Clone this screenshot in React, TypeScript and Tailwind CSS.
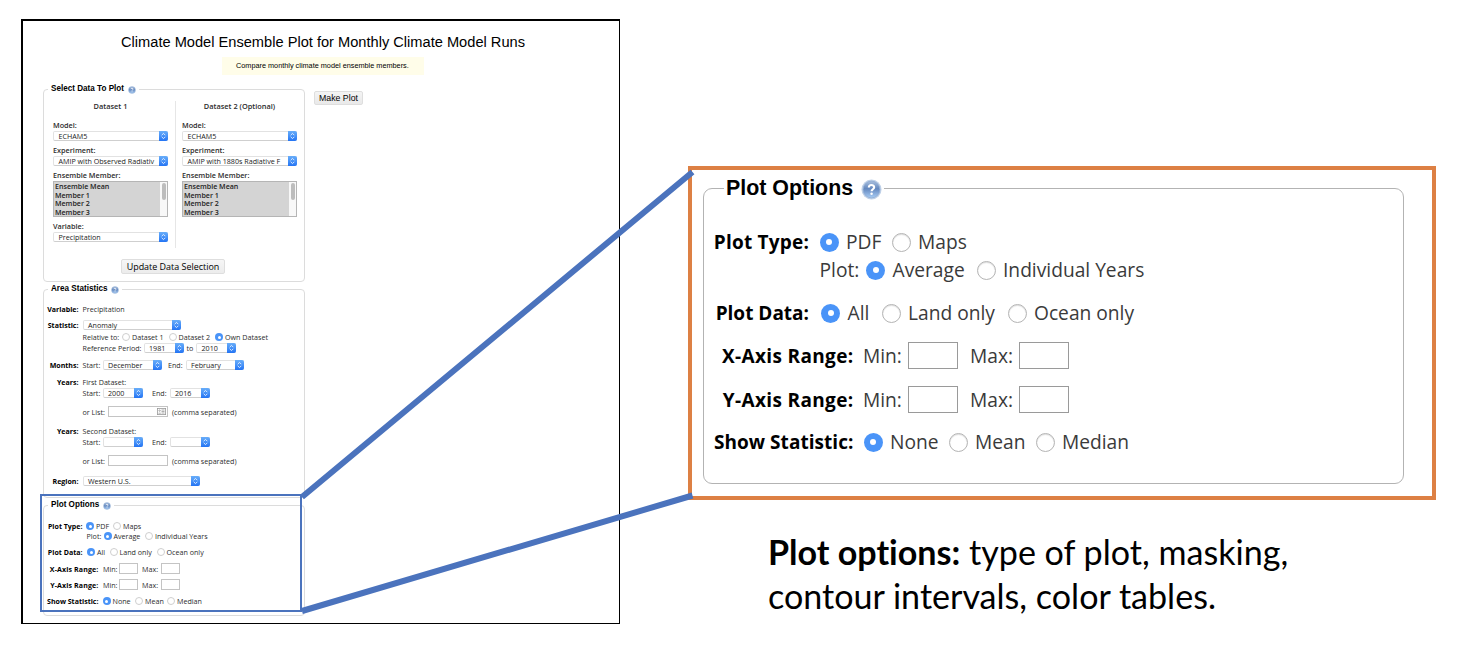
import React from "react";

type Kids = { className?: string; children?: React.ReactNode };

const Row = ({ className = "", children }: Kids) => (
  <div className={`flex items-center ${className}`}>{children}</div>
);

const T = ({ className = "", children }: Kids) => (
  <span className={`block shrink-0 whitespace-nowrap ${className}`}>{children}</span>
);

const Help = ({ className = "" }: { className?: string }) => (
  <svg viewBox="0 0 22 22" className={`shrink-0 ${className}`}>
    <defs>
      <linearGradient id="helpFill" x1="0" y1="0" x2="0" y2="1">
        <stop offset="0" stopColor="#a9bfdd" />
        <stop offset="0.45" stopColor="#6488bf" />
        <stop offset="1" stopColor="#a8cdf5" />
      </linearGradient>
    </defs>
    <circle cx="11" cy="11" r="10.5" fill="#bfd1e8" />
    <circle cx="11" cy="11" r="8.8" fill="url(#helpFill)" stroke="#8fabd2" strokeWidth="0.8" />
    <path
      d="M8.2 8.8C8.2 5.4 13.8 5.5 13.8 8.6C13.8 10.7 11.1 10.7 11.1 12.8"
      fill="none"
      stroke="#fff"
      strokeWidth="2.2"
    />
    <circle cx="11.1" cy="15.5" r="1.3" fill="#fff" />
  </svg>
);

const Radio = ({ on, big }: { on?: boolean; big?: boolean }) => {
  const size = big ? "h-[19px] w-[19px]" : "h-[8px] w-[8px]";
  if (on) {
    return (
      <span className={`flex shrink-0 items-center justify-center rounded-full bg-[#4a94f8] ${size}`}>
        <span className={`rounded-full bg-white ${big ? "h-[6px] w-[6px]" : "h-[3px] w-[3px]"}`} />
      </span>
    );
  }
  return (
    <span
      className={`shrink-0 rounded-full border bg-white ${
        big ? "border-[#b4b4b4] shadow-[inset_0_1px_1px_#ddd]" : "border-[#cfcfcf]"
      } ${size}`}
    />
  );
};

const Option = ({ on, big, className = "", children }: Kids & { on?: boolean; big?: boolean }) => (
  <span className={`flex shrink-0 items-center whitespace-nowrap ${big ? "gap-[7.5px]" : "gap-[2px]"} ${className}`}>
    <Radio on={on} big={big} />
    <span>{children}</span>
  </span>
);

const Select = ({ className = "", children }: Kids) => (
  <span
    className={`flex h-[10px] shrink-0 items-stretch rounded-[2px] border border-[#e2e2e2] border-b-[#cfcfcf] bg-white text-[#222] ${className}`}
  >
    <span className="-my-px flex min-w-0 flex-1 items-center whitespace-nowrap pl-[4.5px] leading-[10px]">
      <span>{children}</span>
    </span>
    <span className="-my-px -mr-px flex w-[9px] shrink-0 items-center justify-center rounded-r-[2px] bg-linear-to-b from-[#68adf9] to-[#2374f4]">
      <svg viewBox="0 0 9 10" className="h-[10px] w-[9px]" fill="none" stroke="#fff" strokeWidth="0.8">
        <path d="M2.7 4.2L4.5 2.4L6.3 4.2M2.7 5.8L4.5 7.6L6.3 5.8" />
      </svg>
    </span>
  </span>
);

const Members = () => (
  <div className="flex h-[36px] w-[115px] border border-[#b5b5b5] bg-[#d4d4d4]">
    <div className="flex-1 pl-px text-[7.1px] font-semibold leading-[8.7px] text-[#222]">
      <div>Ensemble Mean</div>
      <div>Member 1</div>
      <div>Member 2</div>
      <div>Member 3</div>
    </div>
    <div className="flex w-[7px] justify-center bg-[#f8f8f8] pt-px">
      <div className="h-[17px] w-[4px] rounded-full bg-[#bdbdbd]" />
    </div>
  </div>
);

const Legend = ({ children }: Kids) => (
  <legend className="ml-[4px] flex h-[12px] items-center bg-white px-[3px] font-['Liberation_Sans',sans-serif] text-[8.15px] font-bold leading-[12px] text-black">
    <span>{children}</span>
    <Help className="ml-[4px] mt-px h-[8px] w-[8px]" />
  </legend>
);

const smallInput = "h-[11px] w-[19px] shrink-0 border border-[#c4c4c4] bg-white";
const bigInput = "h-[27px] w-[50px] shrink-0 border border-[#9a9a9a] bg-white";
const fieldLabel = "font-semibold text-[7.25px]";

const Dataset = ({ title, experiment, className = "", children }: Kids & { title: string; experiment: string }) => (
  <div className={`flex flex-col ${className}`}>
    <T className="h-[25px] w-[115px] text-center text-[7.4px] font-semibold leading-[22px]">{title}</T>
    <T className={`h-[11px] leading-[10px] ${fieldLabel}`}>Model:</T>
    <Select className="w-[115px]">ECHAM5</Select>
    <T className={`mt-[4px] h-[11px] leading-[10px] ${fieldLabel}`}>Experiment:</T>
    <Select className="w-[115px]">{experiment}</Select>
    <T className={`mt-[4px] h-[11px] leading-[10px] ${fieldLabel}`}>Ensemble Member:</T>
    <Members />
    {children}
  </div>
);

const SelectData = () => (
  <fieldset className="h-[199px] w-[262px] rounded-[4px] border border-[#dcdcdc]">
    <Legend>Select Data To Plot</Legend>
    <div className="flex">
      <div className="w-[131px] pl-[9px]">
        <Dataset title="Dataset 1" experiment="AMIP with Observed Radiativ">
          <T className={`mt-[4px] h-[11px] leading-[10px] ${fieldLabel}`}>Variable:</T>
          <Select className="w-[115px]">Precipitation</Select>
        </Dataset>
      </div>
      <div className="mt-[6px] h-[147px] w-px bg-[#e6e6e6]" />
      <div className="pl-[6px]">
        <Dataset title="Dataset 2 (Optional)" experiment="AMIP with 1880s Radiative F" />
      </div>
    </div>
    <div className="mt-[11px] flex pl-[77px]">
      <button className="h-[15px] w-[104px] whitespace-nowrap rounded-[2px] border border-[#dedede] bg-linear-to-b from-[#f6f6f6] to-[#ececec] text-[8.95px] font-medium leading-[13px] text-black">
        Update Data Selection
      </button>
    </div>
  </fieldset>
);

const label = "flex justify-end font-bold text-black text-[7.05px]";

const YearsBlock = ({ title, from, to, icon }: { title: string; from: string; to: string; icon?: boolean }) => (
  <>
    <Row className="h-[10px]">
      <T className={`w-[34.5px] ${label}`}>Years:</T>
      <T className="ml-[4px]">{title}</T>
    </Row>
    <Row className="h-[11px] pl-[38.5px]">
      <T className="w-[20px]">Start:</T>
      <Select className="w-[40.5px]">{from}</Select>
      <T className="ml-[9px] w-[17.5px]">End:</T>
      <Select className="w-[40px]">{to}</Select>
    </Row>
    <Row className="mt-[8px] h-[11px] pl-[38.5px]">
      <T className="w-[25.5px]">or List:</T>
      <span className="flex h-[11px] w-[60px] items-center justify-end border border-[#c4c4c4] bg-white pr-px">
        {icon && (
          <svg viewBox="0 0 9 7" className="h-[7px] w-[9px]" fill="none" stroke="#999" strokeWidth="0.8">
            <rect x="0.4" y="0.4" width="8.2" height="6.2" />
            <path d="M4.5 2H7.5M4.5 3.5H7.5M4.5 5H7.5" />
            <circle cx="2.6" cy="2.6" r="0.7" />
            <path d="M1.5 5.2H3.8" />
          </svg>
        )}
      </span>
      <T className="ml-[4px]">(comma separated)</T>
    </Row>
  </>
);

const AreaStatistics = () => (
  <fieldset className="mt-px h-[215px] w-[262px] rounded-[4px] border border-[#dcdcdc]">
    <Legend>Area Statistics</Legend>
    <Row className="mt-[9px] h-[10px]">
      <T className={`w-[34.5px] ${label}`}>Variable:</T>
      <T className="ml-[4px]">Precipitation</T>
    </Row>
    <Row className="mt-[6px] h-[10px]">
      <T className={`w-[34.5px] ${label}`}>Statistic:</T>
      <Select className="ml-[4px] w-[98px]">Anomaly</Select>
    </Row>
    <Row className="mt-[2px] h-[10px] pl-[38.5px]">
      <T className="w-[39.5px]">Relative to:</T>
      <Option className="w-[46.5px]">Dataset 1</Option>
      <Option className="w-[46.5px]">Dataset 2</Option>
      <Option on>Own Dataset</Option>
    </Row>
    <Row className="mt-px h-[10px] pl-[38.5px]">
      <T className="w-[61px]">Reference Period:</T>
      <Select className="w-[40.5px]">1981</Select>
      <T className="ml-[2.5px] w-[9.5px]">to</T>
      <Select className="w-[40px]">2010</Select>
    </Row>
    <Row className="mt-[7px] h-[10px]">
      <T className={`w-[34.5px] ${label}`}>Months:</T>
      <T className="ml-[4px] w-[20px]">Start:</T>
      <Select className="w-[59px]">December</Select>
      <T className="ml-[6.5px] w-[17.5px]">End:</T>
      <Select className="w-[58.5px]">February</Select>
    </Row>
    <div className="mt-[7px]">
      <YearsBlock title="First Dataset:" from="2000" to="2016" icon />
    </div>
    <div className="mt-[9px]">
      <YearsBlock title="Second Dataset:" from="" to="" />
    </div>
    <Row className="mt-[9px] h-[11px]">
      <T className={`w-[34.5px] ${label}`}>Region:</T>
      <Select className="ml-[4px] w-[117px]">Western U.S.</Select>
    </Row>
  </fieldset>
);

const PlotOptionsSmall = () => (
  <fieldset className="mt-px h-[117px] w-[262px] rounded-[4px] border border-[#dcdcdc]">
    <Legend>Plot Options</Legend>
    <Row className="mt-[10px] h-[10px]">
      <T className={`w-[38.5px] ${label}`}>Plot Type:</T>
      <Option on className="ml-[3.5px] w-[27px]">PDF</Option>
      <Option>Maps</Option>
    </Row>
    <Row className="h-[10px] pl-[42.5px]">
      <T className="w-[17px]">Plot:</T>
      <Option on className="w-[41.5px]">Average</Option>
      <Option>Individual Years</Option>
    </Row>
    <Row className="mt-[6px] h-[10px]">
      <T className={`w-[38.5px] ${label}`}>Plot Data:</T>
      <Option on className="ml-[4.5px] w-[22.5px]">All</Option>
      <Option className="w-[47px]">Land only</Option>
      <Option>Ocean only</Option>
    </Row>
    <Row className="mt-[6px] h-[11px]">
      <T className={`w-[54.5px] tracking-[0.12px] ${label}`}>X-Axis Range:</T>
      <T className="ml-[4.5px] w-[16px]">Min:</T>
      <span className={smallInput} />
      <T className="ml-[4px] w-[18.5px]">Max:</T>
      <span className={smallInput} />
    </Row>
    <Row className="mt-[5px] h-[11px]">
      <T className={`w-[54.5px] tracking-[0.12px] ${label}`}>Y-Axis Range:</T>
      <T className="ml-[4.5px] w-[16px]">Min:</T>
      <span className={smallInput} />
      <T className="ml-[4px] w-[18.5px]">Max:</T>
      <span className={smallInput} />
    </Row>
    <Row className="mt-[6px] h-[10px]">
      <T className={`w-[54.5px] ${label}`}>Show Statistic:</T>
      <Option on className="ml-[4px] w-[32.5px]">None</Option>
      <Option className="w-[32px]">Mean</Option>
      <Option>Median</Option>
    </Row>
  </fieldset>
);

const bigLabel = "text-right font-bold text-black text-[19px]";

const PlotOptionsBig = () => (
  <section className="h-[334px] w-[748px] border-4 border-[#dd8044] bg-white pl-[11px] pt-[5px] font-['Open_Sans',sans-serif] text-[19.2px] leading-[28px] text-[#3a3a3a]">
    <fieldset className="h-[309px] w-[701px] rounded-[9px] border border-[#b3b3b3]">
      <legend className="ml-[20px] flex h-[26px] items-center bg-white pl-[2px] pr-[2px] font-['Liberation_Sans',sans-serif] text-[21.4px] font-bold leading-[26px] text-black">
        <span>Plot Options</span>
        <Help className="ml-[8px] mt-[3px] h-[21px] w-[21px]" />
      </legend>
      <Row className="mt-[27px] h-[28px]">
        <T className={`w-[105px] tracking-[0.2px] ${bigLabel}`}>Plot Type:</T>
        <Option big on className="ml-[10.5px] w-[72px]">PDF</Option>
        <Option big>Maps</Option>
      </Row>
      <Row className="h-[28px] pl-[115.5px]">
        <T className="w-[46.5px]">Plot:</T>
        <Option big on className="w-[110.5px]">Average</Option>
        <Option big>Individual Years</Option>
      </Row>
      <Row className="mt-[15px] h-[28px]">
        <T className={`w-[105px] ${bigLabel}`}>Plot Data:</T>
        <Option big on className="ml-[12px] w-[60.5px]">All</Option>
        <Option big className="w-[126px]">Land only</Option>
        <Option big>Ocean only</Option>
      </Row>
      <Row className="mt-[15px] h-[27px]">
        <T className={`w-[149.5px] tracking-[0.35px] ${bigLabel}`}>X-Axis Range:</T>
        <T className="ml-[9.5px] w-[45px]">Min:</T>
        <span className={bigInput} />
        <T className="ml-[12px] w-[49px]">Max:</T>
        <span className={bigInput} />
      </Row>
      <Row className="mt-[17px] h-[27px]">
        <T className={`w-[149.5px] tracking-[0.35px] ${bigLabel}`}>Y-Axis Range:</T>
        <T className="ml-[9.5px] w-[45px]">Min:</T>
        <span className={bigInput} />
        <T className="ml-[12px] w-[49px]">Max:</T>
        <span className={bigInput} />
      </Row>
      <Row className="mt-[15px] h-[28px]">
        <T className={`w-[149.5px] tracking-[0.05px] ${bigLabel}`}>Show Statistic:</T>
        <Option big on className="ml-[10px] w-[85px]">None</Option>
        <Option big className="w-[87px]">Mean</Option>
        <Option big>Median</Option>
      </Row>
    </fieldset>
  </section>
);

export default function App() {
  return (
    <div className="relative flex h-[650px] w-[1476px] overflow-hidden bg-white">
      <main className="ml-[21px] mt-[19px] h-[605px] w-[599px] shrink-0 border border-l-2 border-t-2 border-black font-['Open_Sans',sans-serif] text-[7.15px] leading-[10px] text-[#2c2c2c]">
        <h1 className="h-[36px] whitespace-nowrap pl-[98px] pt-[11px] font-['Liberation_Sans',sans-serif] text-[14.63px] leading-[20px] text-black">
          Climate Model Ensemble Plot for Monthly Climate Model Runs
        </h1>
        <p className="ml-[199px] h-[18px] w-[202px] whitespace-nowrap bg-[#fffde9] pl-[14px] font-['Liberation_Sans',sans-serif] text-[7.3px] leading-[18px] text-black">
          Compare monthly climate model ensemble members.
        </p>
        <div className="mt-[8px] flex items-start pl-[20px]">
          <div className="flex flex-col">
            <SelectData />
            <AreaStatistics />
            <PlotOptionsSmall />
          </div>
          <button className="ml-[9px] mt-[8px] h-[14px] w-[49px] whitespace-nowrap rounded-[2px] border border-[#dedede] bg-linear-to-b from-[#f4f4f4] to-[#e9e9e9] font-['Liberation_Sans',sans-serif] text-[8.75px] leading-[11px] text-black">
            Make Plot
          </button>
        </div>
      </main>

      <div className="ml-[68px] mt-[166px] flex flex-col">
        <PlotOptionsBig />
        <p className="ml-[80px] mt-[30px] whitespace-nowrap font-['Lato',sans-serif] text-[34.1px] leading-[44px] text-black [font-variant-ligatures:none]">
          <strong className="font-bold">Plot options:</strong> type of plot, masking,
          <br />
          contour intervals, color tables.
        </p>
      </div>

      <div className="absolute left-[40px] top-[494px] h-[118px] w-[262px] border-2 border-[#4b73bd]" />
      <svg className="pointer-events-none absolute left-0 top-0 h-[650px] w-[1476px]" viewBox="0 0 1476 650">
        <path d="M302 497L692.5 172M302 611L692.5 495.5" stroke="#4b73bd" strokeWidth="6" fill="none" />
      </svg>
    </div>
  );
}
